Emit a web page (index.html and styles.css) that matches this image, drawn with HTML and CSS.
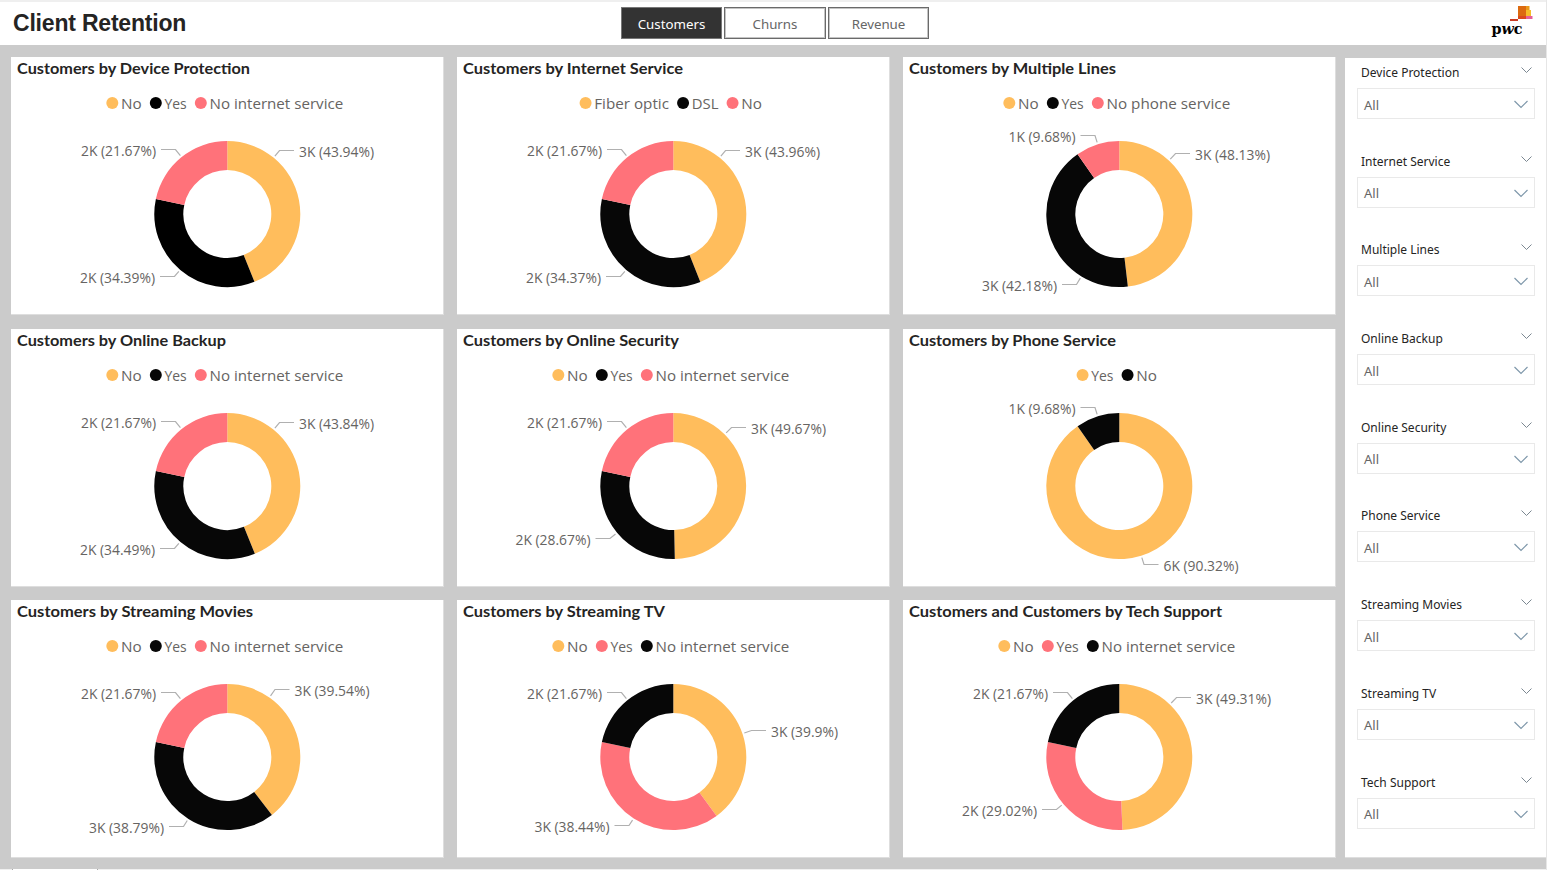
FILE: index.html
```html
<!DOCTYPE html>
<html lang="en">
<head>
<meta charset="utf-8">
<title>Client Retention</title>
<link rel="stylesheet" href="styles.css">
</head>
<body>
<div class="report">
  <header class="header">
    <h1 class="title">Client Retention</h1>
    <nav class="tabs">
      <a class="tab tab-active">Customers</a>
      <a class="tab tab-wide">Churns</a>
      <a class="tab tab-last">Revenue</a>
    </nav>
    <svg class="logo" width="44" height="36" viewBox="0 0 44 36">
      <path fill="#dc6a10" d="M28 2h8.500v13H28z"/>
      <path fill="#eb9a1c" d="M36 2h3.500v5H36z"/>
      <path fill="#f6bd28" d="M36 6h5v6.500h-5z"/>
      <path fill="#db4a1c" d="M28 12h8v3h-8z"/>
      <path fill="#e5609a" d="M36 12h6.500v3H36z"/>
      <path fill="#c93a22" d="M20 15h8v2h-8z"/>
      <text class="logo-text" x="1.500" y="30" textLength="31" lengthAdjust="spacingAndGlyphs">p<tspan class="logo-slant">w</tspan>c</text>
    </svg>
  </header>
  <div class="body">
    <main class="charts"></main>
    <aside class="slicers"></aside>
  </div>
  <footer class="footer"><span class="footer-tab"></span></footer>
</div>
<script src="charts.js"></script>
</body>
</html>
```
FILE: styles.css
```css
* { box-sizing: border-box; }
body { margin: 0; background: #fff; font-family: "Open Sans", "Noto Sans", sans-serif; }
.report { width: 1547px; height: 870px; overflow: hidden; display: flex; flex-direction: column; border-right: 1px solid #e6e6e6; }
.header { height: 45px; flex: none; display: grid; grid-template-columns: 621px 1fr auto; align-items: start; border-top: 2px solid #efefef; background: #fff; }
.title { margin: 5px 0 0 13px; font: bold 23px/32px "Liberation Sans", Arial, sans-serif; color: #252423; letter-spacing: -0.2px; }
.tabs { display: flex; gap: 2px; padding-top: 5px; }
.tab { width: 101px; height: 32px; border: 1.500px solid #6a6a6a; box-shadow: inset 0 0 0 1px #c4c4c4; font-family: "Noto Sans", sans-serif; font-size: 13.3px; line-height: 32px; text-align: center; color: #666; }
.tab-wide { width: 102px; }
.tab-last { width: 101px; }
.tab-active { background: #333; color: #fff; border-color: #777; box-shadow: none; }
.logo { margin: 2px 12px 0 0; overflow: visible; }
.logo-text { font: bold 15px "DejaVu Serif", serif; fill: #000; }
.logo-slant { font-style: italic; }
.body { flex: 1; display: flex; gap: 9px; padding: 12px 0 0 11px; background: #cbcbcb; }
.charts { display: grid; grid-template-columns: repeat(3, 433px); grid-template-rows: 258px 258px 258px; row-gap: 13.5px; column-gap: 13px; align-content: start; }
.card { background: #fff; border-right: 1px solid #dedede; border-bottom: 1px solid #dedede; overflow: hidden; }
.card-svg { display: block; }
.card-title { font: bold 15.3px Lato, "Open Sans", sans-serif; fill: #252423; }
.legend { font-size: 15.3px; fill: #666462; }
.value { font-size: 15px; fill: #666462; }
.leader { fill: none; stroke: #b0b0b0; stroke-width: 1.2; }
.slicers { width: 201px; height: 800px; margin-top: 1px; background: #fff; padding: 5px 12px 0 12px; border-bottom: 1px solid #dedede; }
.slicer { height: 88.7px; }
.slicer-head { display: flex; justify-content: space-between; height: 25px; padding: 0 2px 0 4px; font: 12px/20px "Noto Sans", sans-serif; color: #252423; }
.slicer-head svg { margin-top: 3px; }
.slicer-box { display: flex; justify-content: space-between; align-items: center; width: 178px; height: 31px; padding: 2px 6px 0 6px; border: 1.500px solid #e9e9e9; font: 13px/28px "Noto Sans", sans-serif; color: #666; }
.chevron { fill: none; stroke: #7b8791; stroke-width: 1; }
.chevron-big { fill: none; stroke: #7e97aa; stroke-width: 1.2; }
.footer { height: 1px; background: #f0f0f0; flex: none; padding-left: 12px; }
.footer-tab { display: block; width: 86px; height: 1px; background: #fff; border: solid #aaa; border-width: 0 1px; }
```
FILE: charts.js
```javascript
const Y = '#ffbd5c', B = '#070707', P = '#ff727a';
const NIS = 'No internet service';
const CX = 216.3, CY = 157.1, R = 73, RI = 44;
// Rendered widths of legend entries, in pixels
const legendWidth = { 'No': 21, 'Yes': 22.5, 'DSL': 27, 'Fiber optic': 75, [NIS]: 134, 'No phone service': 124 };

// slice: [legend, colour, percent]; label: [text, left edge, vertical centre, side of ring]
const charts = [
  { title: 'Customers by Device Protection', tw: 233, slices: [['No', Y, 43.94], ['Yes', '#000', 34.39], [NIS, P, 21.67]],
    labels: [['3K (43.94%)', 288, 94.5, 'r'], ['2K (34.39%)', 69, 220.5, 'l'], ['2K (21.67%)', 70, 93.5, 'l']] },
  { title: 'Customers by Internet Service', tw: 220, slices: [['Fiber optic', Y, 43.96], ['DSL', B, 34.37], ['No', P, 21.67]],
    labels: [['3K (43.96%)', 288, 94.5, 'r'], ['2K (34.37%)', 69, 220.5, 'l'], ['2K (21.67%)', 70, 93.5, 'l']] },
  { title: 'Customers by Multiple Lines', tw: 207, slices: [['No', Y, 48.13], ['Yes', B, 42.18], ['No phone service', P, 9.69]],
    labels: [['3K (48.13%)', 292, 97.5, 'r'], ['3K (42.18%)', 79, 228.5, 'l'], ['1K (9.68%)', 105.5, 79.5, 'l']] },
  { title: 'Customers by Online Backup', tw: 209, slices: [['No', Y, 43.84], ['Yes', B, 34.49], [NIS, P, 21.67]],
    labels: [['3K (43.84%)', 288, 94.5, 'r'], ['2K (34.49%)', 69, 220.5, 'l'], ['2K (21.67%)', 70, 93.5, 'l']] },
  { title: 'Customers by Online Security', tw: 216, slices: [['No', Y, 49.67], ['Yes', B, 28.66], [NIS, P, 21.67]],
    labels: [['3K (49.67%)', 294, 99.5, 'r'], ['2K (28.67%)', 58.5, 210.5, 'l'], ['2K (21.67%)', 70, 93.5, 'l']] },
  { title: 'Customers by Phone Service', tw: 207, slices: [['Yes', Y, 90.32], ['No', B, 9.68]],
    labels: [['6K (90.32%)', 260.5, 236.5, 'r'], ['1K (9.68%)', 105.5, 79.5, 'l']] },
  { title: 'Customers by Streaming Movies', tw: 236, slices: [['No', Y, 39.54], ['Yes', B, 38.79], [NIS, P, 21.67]],
    labels: [['3K (39.54%)', 283.5, 90.5, 'r'], ['3K (38.79%)', 78, 227.5, 'l'], ['2K (21.67%)', 70, 93.5, 'l']] },
  { title: 'Customers by Streaming TV', tw: 202, slices: [['No', Y, 39.9], ['Yes', P, 38.43], [NIS, B, 21.67]],
    labels: [['3K (39.9%)', 314, 131.5, 'r'], ['3K (38.44%)', 77.5, 226.5, 'l'], ['2K (21.67%)', 70, 93.5, 'l']] },
  { title: 'Customers and Customers by Tech Support', tw: 313, slices: [['No', Y, 49.31], ['Yes', P, 29.02], [NIS, B, 21.67]],
    labels: [['3K (49.31%)', 293, 98.5, 'r'], ['2K (29.02%)', 59, 210.5, 'l'], ['2K (21.67%)', 70, 93.5, 'l']] }
];

const point = (r, pct) => {
  const a = pct / 100 * 2 * Math.PI;
  return (CX + r * Math.sin(a)).toFixed(2) + ' ' + (CY - r * Math.cos(a)).toFixed(2);
};
const text = (cls, x, y, w, s) =>
  `<text class="${cls}" x="${x}" y="${y}" textLength="${w}" lengthAdjust="spacingAndGlyphs">${s}</text>`;

function drawChart(c) {
  let out = text('card-title', 6, 17, c.tw, c.title);

  const total = c.slices.reduce((t, s) => t + 14.5 + legendWidth[s[0]], 0) + 8 * (c.slices.length - 1);
  let x = 213.8 - total / 2;
  for (const [name, color] of c.slices) {
    out += `<circle cx="${x + 6}" cy="46" r="6" fill="${color}"/>` + text('legend', x + 14.7, 52, legendWidth[name] - 0.3, name);
    x += 22.5 + legendWidth[name];
  }

  let start = 0;
  for (const [, color, pct] of c.slices) {
    const end = start + pct, big = pct > 50 ? 1 : 0;
    out += `<path fill="${color}" d="M${point(R, start)}A${R} ${R} 0 ${big} 1 ${point(R, end)}L${point(RI, end)}A${RI} ${RI} 0 ${big} 0 ${point(RI, start)}Z"/>`;
    start = end;
  }

  for (const [s, left, cy, side] of c.labels) {
    const w = s.length > 10 ? 75 : 67, y = Math.round(cy - 1) - 0.5;
    const far = side === 'r' ? left - 5 : left + w + 5;
    const elbow = side === 'r' ? far - 14.5 : far + 14.5;
    const k = 75 / Math.hypot(elbow - CX, y - CY);
    out += `<path class="leader" d="M${far} ${y}H${elbow}L${CX + (elbow - CX) * k} ${CY + (y - CY) * k}"/>` + text('value', left, cy + 5.4, w, s);
  }
  return `<section class="card"><svg class="card-svg" width="432" height="256">${out}</svg></section>`;
}

document.querySelector('.charts').innerHTML = charts.map(drawChart).join('');

document.querySelector('.slicers').innerHTML =
  ['Device Protection', 'Internet Service', 'Multiple Lines', 'Online Backup', 'Online Security', 'Phone Service', 'Streaming Movies', 'Streaming TV', 'Tech Support']
    .map(n => `<div class="slicer">
      <div class="slicer-head"><span>${n}</span><svg width="11" height="8"><path class="chevron" d="M.5 1.5l5 5 5-5"/></svg></div>
      <div class="slicer-box"><span>All</span><svg width="14" height="9"><path class="chevron-big" d="M.5 1l6.5 6.5L13.5 1"/></svg></div>
    </div>`).join('');
```
